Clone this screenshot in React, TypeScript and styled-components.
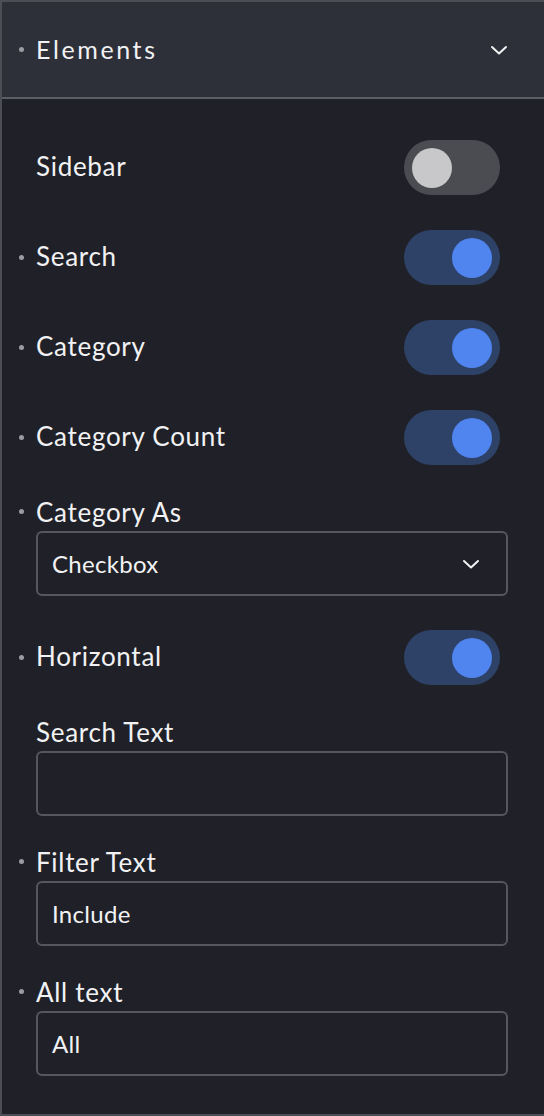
import styled, { createGlobalStyle } from 'styled-components';

const GlobalStyle = createGlobalStyle`
  html, body {
    margin: 0;
    padding: 0;
    background: #202128;
  }
  body {
    font-family: Lato, "Noto Sans", sans-serif;
    -webkit-font-smoothing: antialiased;
  }
`;

const Panel = styled.div`
  width: 544px;
  height: 1116px;
  box-sizing: border-box;
  background: #202128;
  border-top: 2px solid #4c4e55;
  border-left: 2px solid #4c4e55;
  border-bottom: 2px solid #4c4e55;
  display: flex;
  flex-direction: column;
  overflow: hidden;
`;

const Header = styled.div`
  height: 97px;
  flex-shrink: 0;
  box-sizing: border-box;
  background: #2d3039;
  border-bottom: 2px solid #5b5e65;
  display: flex;
  align-items: center;
  padding: 0 36px 0 34px;
`;

const HeaderTitle = styled.span`
  color: #f2f2f4;
  font-size: 25px;
  letter-spacing: 2.6px;
  line-height: 1;
`;

const Dot = styled.span`
  position: absolute;
  left: -17px;
  top: 50%;
  width: 5px;
  height: 5px;
  margin-top: -3px;
  border-radius: 50%;
  background: #9a9ca2;
`;

const LabelWrap = styled.span<{ $grow?: boolean }>`
  position: relative;
  display: inline-flex;
  align-items: center;
  flex: ${({ $grow }) => ($grow ? 1 : '0 0 auto')};
`;

const Label = styled.span`
  color: #f2f2f4;
  font-size: 26px;
  letter-spacing: 0.7px;
  line-height: 26px;
`;

const Body = styled.div`
  flex: 1;
  display: flex;
  flex-direction: column;
  gap: 33px;
  padding: 40px 36px 0 34px;
`;

const ToggleRow = styled.div`
  height: 57px;
  display: flex;
  align-items: center;
  justify-content: space-between;
  padding-right: 8px;

  ${Label} {
    padding-bottom: 4px;
  }
`;

const Track = styled.div<{ $on?: boolean }>`
  width: 96px;
  height: 55px;
  border-radius: 28px;
  background: ${({ $on }) => ($on ? '#2e4268' : '#4a4c52')};
  display: flex;
  align-items: center;
  justify-content: ${({ $on }) => ($on ? 'flex-end' : 'flex-start')};
  padding: 0 8px;
  box-sizing: border-box;
`;

const Knob = styled.div<{ $on?: boolean }>`
  width: 40px;
  height: 40px;
  border-radius: 50%;
  background: ${({ $on }) => ($on ? '#5084ee' : '#c8c8ca')};
`;

const Field = styled.div`
  display: flex;
  flex-direction: column;
  gap: 6px;
`;

const Box = styled.div`
  height: 65px;
  box-sizing: border-box;
  border: 2px solid #55575e;
  border-radius: 6px;
  display: flex;
  align-items: center;
  justify-content: space-between;
  padding: 0 26px 0 14px;
  color: #f2f2f4;
  font-size: 24px;
  letter-spacing: 0.3px;
`;

const Chevron = ({ size = 18 }: { size?: number }) => (
  <svg width={size} height={size} viewBox="0 0 18 18" fill="none">
    <path d="M2 6 L9 12.5 L16 6" stroke="#f2f2f4" strokeWidth="2" strokeLinecap="round" strokeLinejoin="round" />
  </svg>
);

const DotLabel = ({ text, dot = true }: { text: string; dot?: boolean }) => (
  <LabelWrap>
    {dot && <Dot />}
    <Label>{text}</Label>
  </LabelWrap>
);

const Toggle = ({ label, on, dot = true }: { label: string; on?: boolean; dot?: boolean }) => (
  <ToggleRow>
    <DotLabel text={label} dot={dot} />
    <Track $on={on}>
      <Knob $on={on} />
    </Track>
  </ToggleRow>
);

const InputField = ({ label, value, dot = true, select }: { label: string; value?: string; dot?: boolean; select?: boolean }) => (
  <Field>
    <DotLabel text={label} dot={dot} />
    <Box>
      <span>{value}</span>
      {select && <Chevron />}
    </Box>
  </Field>
);

export default function App() {
  return (
    <>
      <GlobalStyle />
      <Panel>
        <Header>
          <LabelWrap $grow>
            <Dot />
            <HeaderTitle>Elements</HeaderTitle>
          </LabelWrap>
          <Chevron />
        </Header>
        <Body>
          <Toggle label="Sidebar" dot={false} />
          <Toggle label="Search" on />
          <Toggle label="Category" on />
          <Toggle label="Category Count" on />
          <InputField label="Category As" value="Checkbox" select />
          <Toggle label="Horizontal" on />
          <InputField label="Search Text" dot={false} />
          <InputField label="Filter Text" value="Include" />
          <InputField label="All text" value="All" />
        </Body>
      </Panel>
    </>
  );
}
